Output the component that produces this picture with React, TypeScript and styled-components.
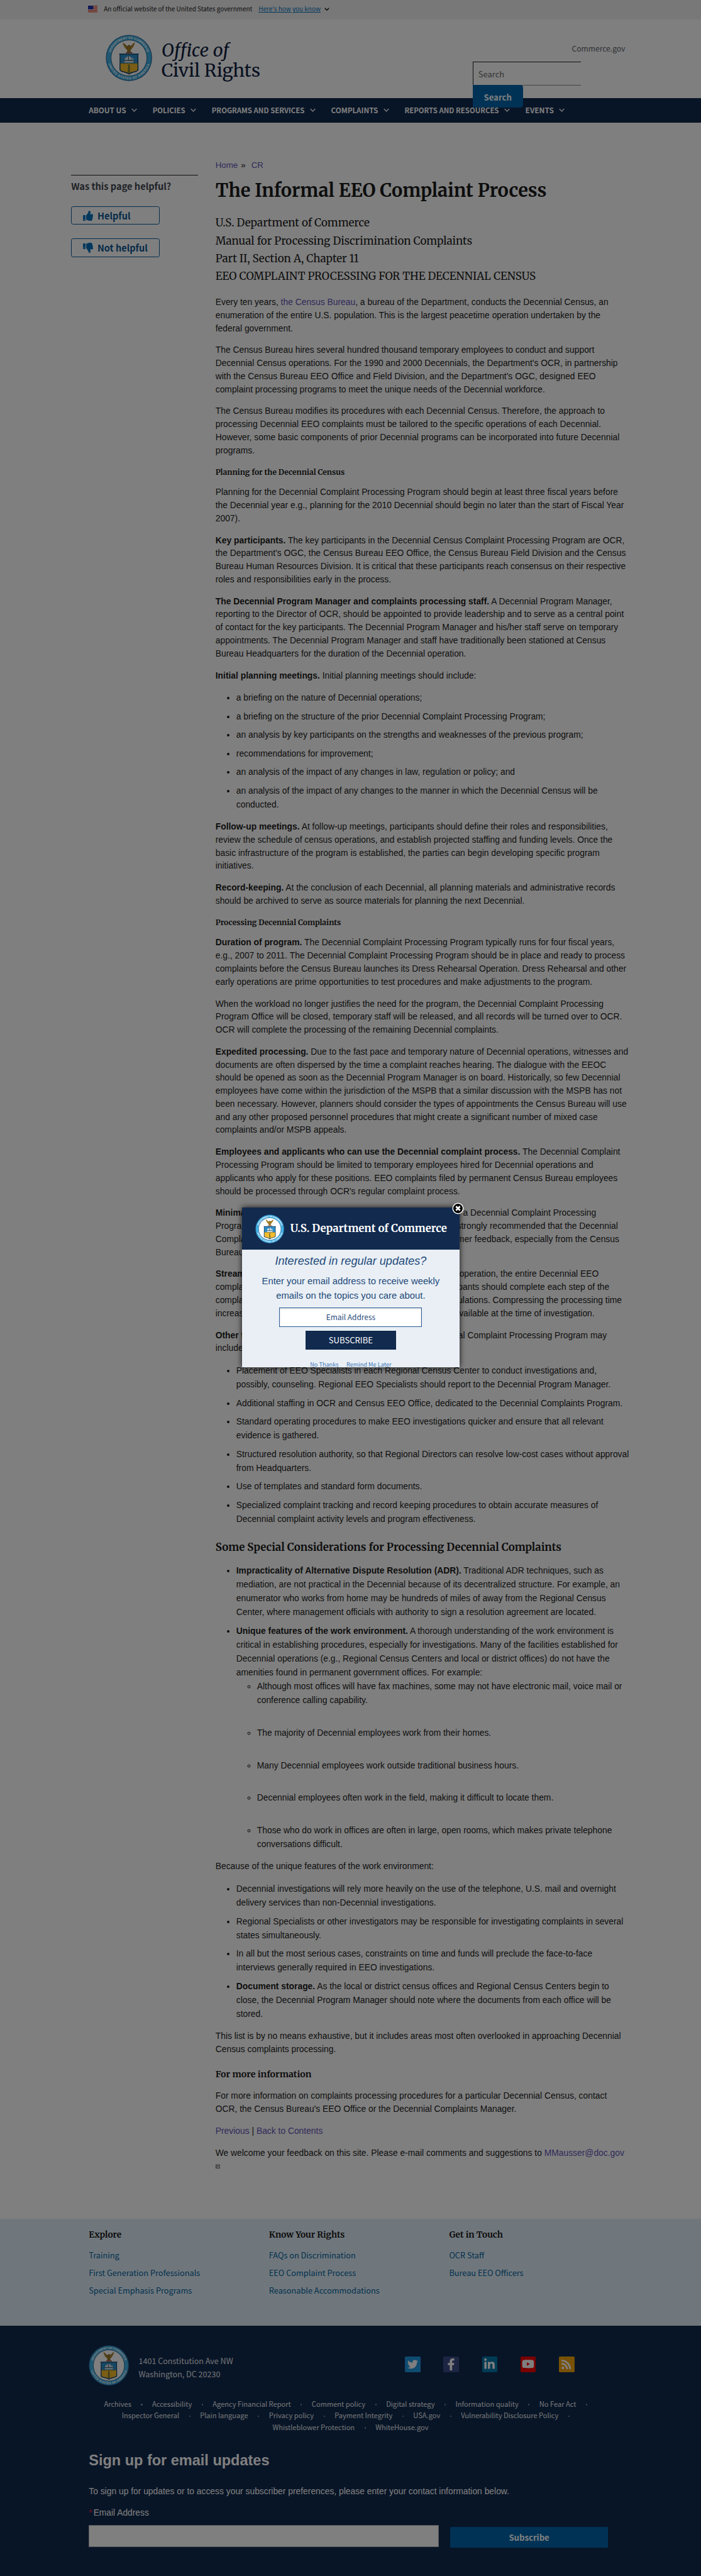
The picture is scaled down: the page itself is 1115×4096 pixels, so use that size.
import React from "react";
import styled, { createGlobalStyle } from "styled-components";
import {
  FaFacebookF,
  FaLinkedinIn,
  FaRss,
  FaThumbsDown,
  FaThumbsUp,
  FaTwitter,
  FaYoutube,
} from "react-icons/fa";

const serif = `Merriweather, "Noto Serif", "DejaVu Serif", serif`;
const sans = `"Noto Sans CJK SC", "Open Sans", sans-serif`;
const body = `"Liberation Sans", Arial, sans-serif`;

const navy = "#112a4e";
const blue = "#0065ab";
const linkBlue = "#0071bc";
const visited = "#5f53b4";
const ink = "#1b1b1b";

const GlobalStyle = createGlobalStyle`
  html { font-size: 8.2593px; }
  *, *::before, *::after { box-sizing: border-box; }
  body { margin: 0; background: #fff; }
  a { text-decoration: none; color: inherit; }
`;

const Page = styled.div`
  position: relative;
  width: 135rem;
  height: 495.93rem;
  overflow: hidden;
  background: #fff;
  color: ${ink};
  font-family: ${body};
  font-size: 1.678rem;
`;

/* ---------- top banner ---------- */

const Banner = styled.div`
  display: flex;
  align-items: center;
  height: 3.7rem;
  padding: 0 0 0.2rem 16.9rem;
  background: #f0f0f0;
  font: 1.206rem/2rem ${sans};
  svg { display: block; }
`;
const FlagIcon = styled.svg`
  width: 1.9rem;
  height: 1.3rem;
  margin-right: 1.2rem;
`;
const BannerLink = styled.a`
  margin: 0 0.7rem 0 1.2rem;
  color: ${linkBlue};
  text-decoration: underline;
`;

const Caret = styled.svg<{ $w: string; $h: string }>`
  width: ${(p) => p.$w};
  height: ${(p) => p.$h};
  fill: none;
  stroke: currentColor;
`;

function Chevron({ w, h, weight }: { w: string; h: string; weight: number }) {
  return (
    <Caret $w={w} $h={h} viewBox="0 0 12 8" strokeWidth={weight}>
      <path d="M1 1.2 6 6.5 11 1.2" />
    </Caret>
  );
}

/* ---------- header ---------- */

const Header = styled.header`
  display: flex;
  align-items: flex-start;
  height: 15.2rem;
  padding: 3rem 14.6rem 0 20.4rem;
`;
const SealSvg = styled.svg<{ $size: string }>`
  flex: none;
  width: ${(p) => p.$size};
  height: ${(p) => p.$size};
`;
const SiteName = styled.div`
  margin: 1.2rem 0 0 1.7rem;
  color: #0f2040;
  font: 3.445rem/3.8rem ${serif};
  white-space: nowrap;
  em { display: block; font-size: 3.49rem; }
`;
const Utility = styled.div`
  display: flex;
  flex-direction: column;
  align-items: flex-start;
  width: 29.4rem;
  margin: 1.4rem 0 0 auto;
`;
const UtilityLink = styled.a`
  align-self: flex-end;
  color: #5b616b;
  font: 1.468rem/2.4rem ${sans};
`;
const SearchBox = styled.div`
  display: flex;
  align-items: center;
  width: 20.9rem;
  height: 4.6rem;
  margin-top: 1.35rem;
  padding: 0.3rem 0 0 1rem;
  border: solid #212121;
  border-width: 0.2rem 0 0.2rem 0.12rem;
  border-bottom-color: #8a8a8a;
  color: #666;
  font: 1.567rem/2.4rem ${sans};
`;
const SearchButton = styled.button`
  position: relative;
  z-index: 1;
  width: 9.7rem;
  height: 4.35rem;
  margin-top: -0.1rem;
  padding: 0.45rem 0 0;
  border: 0;
  border-radius: 0 0.5rem 0.5rem 0;
  background: ${blue};
  color: #fff;
  font: 700 1.6rem/2.4rem ${sans};
`;

/* ---------- navigation ---------- */

const Nav = styled.nav`
  display: flex;
  align-items: center;
  gap: 3rem;
  height: 4.7rem;
  padding: 0.1rem 0 0 17.1rem;
  border-bottom: 0.1rem solid #0a1a30;
  background: ${navy};
  color: #fff;
`;
const NavItem = styled.a<{ $size?: string }>`
  display: flex;
  align-items: center;
  gap: 1rem;
  font: 700 ${(p) => p.$size || "1.385rem"}/2rem ${sans};
  white-space: nowrap;
`;

/* ---------- main ---------- */

const Main = styled.main`
  display: grid;
  grid-template-columns: 24.4rem 79.8rem;
  column-gap: 3.4rem;
  height: 403.5rem;
  padding: 7.02rem 0 0 13.7rem;
`;
const Sidebar = styled.aside`
  align-self: start;
  margin-top: 3.1rem;
  padding-top: 0.85rem;
  border-top: 0.12rem solid #212121;
`;
const Question = styled.h2`
  margin: 0 0 2.6rem;
  color: #3f454e;
  font: 700 1.767rem/2.4rem ${sans};
`;
const VoteButton = styled.button`
  display: flex;
  align-items: center;
  gap: 0.8rem;
  width: 17.1rem;
  height: 3.6rem;
  margin: 0 0 2.6rem;
  padding: 0 0 0 2.2rem;
  border: 0.2rem solid #0a5d9c;
  border-radius: 0.4rem;
  background: none;
  color: #0a5590;
  font: 700 1.76rem/2.4rem ${sans};
  svg { width: 1.95rem; height: 1.95rem; color: ${linkBlue}; }
`;

const Article = styled.article`
  line-height: 2.515rem;
  p { margin: 1.7rem 0; }
`;
const Breadcrumb = styled.div`
  display: flex;
  height: 2.4rem;
  font: 1.612rem/2.4rem ${body};
  span { margin: 0 1.1rem 0 0.6rem; }
`;
const Link = styled.a`
  color: ${visited};
`;
const Title = styled.h1`
  margin: 1.35rem 0 2.25rem;
  font: 700 3.495rem/4.6rem ${serif};
  white-space: nowrap;
`;
const Subtitle = styled.div`
  margin-bottom: 2.02rem;
  font: 2.055rem/3.42rem ${serif};
  white-space: nowrap;
`;
const Minor = styled.h5`
  margin: 2.09rem 0 1.7rem;
  font: 700 1.464rem/1.75rem ${serif};
`;
const Section = styled.h3`
  margin: 2.9rem 0 1.7rem;
  font: 700 2.041rem/2.6rem ${serif};
  white-space: nowrap;
`;
const Info = styled.h4`
  margin: 2.5rem 0 1.7rem;
  font: 700 1.722rem/2.3rem ${serif};
`;
const List = styled.ul`
  margin: 1.7rem 0;
  padding-left: 4rem;
  line-height: 2.68rem;
  > li + li { margin-top: 0.89rem; }
`;
const SubList = styled.ul`
  margin: 0;
  padding-left: 4rem;
  list-style: circle;
  > li + li { margin-top: 3.57rem; }
`;
const SplitLine = styled.span<{ $w: string }>`
  display: flex;
  justify-content: space-between;
  width: ${(p) => p.$w};
  white-space: nowrap;
`;
const MailIcon = styled.svg`
  display: block;
  width: 0.9rem;
  height: 0.9rem;
  margin-top: 0.9rem;
`;

/* ---------- footer ---------- */

const LinkFooter = styled.footer`
  display: grid;
  grid-template-columns: repeat(3, 34.7rem);
  height: 20.6rem;
  padding: 2.05rem 0 0 17.1rem;
  background: #e0eef8;
`;
const FooterColumn = styled.div`
  display: flex;
  flex-direction: column;
  align-items: flex-start;
  gap: 1.17rem;
  color: #00639f;
  font: 1.545rem/2.2rem ${sans};
  h4 {
    margin: 0 0 0.43rem;
    color: ${ink};
    font: 700 1.65rem/2.4rem ${serif};
  }
`;
const DarkFooter = styled.footer`
  height: 48.3rem;
  padding: 3.8rem 17.1rem 0;
  background: ${navy};
  color: #fff;
`;
const Identity = styled.div`
  display: flex;
  align-items: flex-start;
`;
const Address = styled.div`
  margin: 1.85rem 0 0 1.8rem;
  color: #e4e6ea;
  font: 1.521rem/2.47rem ${sans};
`;
const Socials = styled.div`
  display: flex;
  gap: 4.4rem;
  margin: 2.2rem 7.3rem 0 auto;
`;
const Social = styled.a<{ $bg: string; $glyph?: string }>`
  display: flex;
  align-items: center;
  justify-content: center;
  width: 3rem;
  height: 2.95rem;
  border-radius: 0.2rem;
  background: ${(p) => p.$bg};
  svg { width: ${(p) => p.$glyph || "2.1rem"}; height: ${(p) => p.$glyph || "2.1rem"}; }
`;
const PolicyLinks = styled.div`
  margin-top: 2.35rem;
  color: #e8eaee;
  font: 1.345rem/2.25rem ${sans};
`;
const PolicyRow = styled.div`
  display: flex;
  justify-content: center;
  white-space: nowrap;
`;
const PolicyItem = styled.a<{ $dot: boolean }>`
  display: flex;
  align-items: center;
  &::after {
    content: "";
    display: ${(p) => (p.$dot ? "block" : "none")};
    width: 0.25rem;
    height: 0.35rem;
    margin: 0.3rem 1.88rem 0;
    border-radius: 50%;
    background: #7d93b5;
  }
`;
const SignUpTitle = styled.h2`
  margin: 3.6rem 0 2.8rem;
  font: 700 2.847rem/3.6rem ${body};
`;
const SignUpText = styled.p`
  margin: 0 0 1.75rem;
  font: 1.677rem/2.5rem ${body};
`;
const Label = styled.label`
  display: block;
  font: 1.672rem/2.5rem ${body};
  span { margin-right: 0.25rem; color: #e31c3d; }
`;
const Form = styled.div`
  display: flex;
  gap: 2.2rem;
  margin-top: 1rem;
`;
const EmailField = styled.input`
  width: 67.4rem;
  height: 4.2rem;
  border: 0.1rem solid #aeb0b5;
  border-radius: 0;
  background: #fff;
`;
const SubscribeButton = styled.button`
  width: 30.4rem;
  height: 4.1rem;
  margin-top: 0.3rem;
  padding: 0;
  border: 0;
  border-radius: 0.2rem;
  background: ${blue};
  color: #fff;
  font: 700 1.596rem/2.4rem ${sans};
`;

/* ---------- modal ---------- */

const Backdrop = styled.div`
  position: absolute;
  inset: 0;
  z-index: 2;
  background: rgba(0, 0, 0, 0.5);
`;
const ModalFrame = styled.div`
  position: absolute;
  z-index: 3;
  left: 46.6rem;
  top: 232.5rem;
  width: 41.9rem;
  height: 30.77rem;
  box-shadow: 0 0 1.1rem rgba(0, 0, 0, 0.85);
`;
const Modal = styled.div`
  height: 100%;
  overflow: hidden;
  background: #e9eff5;
  color: #1f4a7a;
  text-align: center;
`;
const ModalHead = styled.div`
  display: flex;
  align-items: center;
  gap: 1.2rem;
  height: 8.1rem;
  padding-left: 2.5rem;
  background: ${navy};
  color: #fff;
  font: 700 2.038rem/2.8rem ${serif};
  white-space: nowrap;
`;
const ModalTitle = styled.div`
  padding-top: 0.84rem;
  font: italic 2.198rem/2.8rem ${body};
`;
const ModalText = styled.div`
  margin-top: 1.12rem;
  font: 1.796rem/2.77rem ${body};
`;
const ModalInput = styled.div`
  width: 27.5rem;
  height: 3.77rem;
  margin: 0.83rem auto 0.7rem;
  border: 0.12rem solid #2f5f96;
  background: #fff;
  box-shadow: inset 0 0.1rem 0.3rem rgba(0, 0, 0, 0.2);
  font: 1.445rem/3.5rem ${sans};
`;
const ModalButton = styled.button`
  display: block;
  width: 17.5rem;
  height: 3.6rem;
  margin: 0 auto 2.05rem;
  padding: 0;
  border: 0;
  background: ${navy};
  color: #fff;
  font: 1.584rem/3.4rem ${sans};
`;
const ModalLinks = styled.div`
  display: flex;
  justify-content: center;
  gap: 1.5rem;
  color: #3f78b5;
  font: 1.112rem/1.6rem ${sans};
`;
const CloseIcon = styled.svg`
  position: absolute;
  right: -0.85rem;
  top: -1.05rem;
  width: 2.3rem;
  height: 2.3rem;
`;

function Seal({ size, id }: { size: string; id: string }) {
  return (
    <SealSvg $size={size} viewBox="0 0 90 90">
      <defs>
        <path id={`${id}-top`} d="M8.3 45a36.7 36.7 0 0 1 73.4 0" />
        <path id={`${id}-bottom`} d="M3.8 45a41.2 41.2 0 0 0 82.4 0" />
      </defs>
      <circle cx="45" cy="45" r="44.5" fill="#2b6fa0" />
      <circle cx="45" cy="45" r="43" fill="#41aee2" />
      <circle cx="45" cy="45" r="34.6" fill="#fff" stroke="#24618f" strokeWidth="1.2" />
      <g fill="#fff" fontFamily="Liberation Sans, Arial, sans-serif" fontSize="6.2" fontWeight="700">
        <text textAnchor="middle" textLength="94" lengthAdjust="spacing">
          <textPath href={`#${id}-top`} startOffset="50%">DEPARTMENT OF COMMERCE</textPath>
        </text>
        <text textAnchor="middle" textLength="106" lengthAdjust="spacing">
          <textPath href={`#${id}-bottom`} startOffset="50%">UNITED STATES OF AMERICA</textPath>
        </text>
      </g>
      {/* eagle */}
      <path
        d="M32.3 15.4c2.4.6 5.300 3 7.700 5.600 1.300 1.300 2.300 1.500 3 .6.300-1 1-2 2.200-2 1 0 1.700.7 1.600 1.900 1.200.5 2.600-.2 4-1.900 2-2.500 4-3.700 6-4.200-1.700 2.700-1.900 5.400-3.700 8.300-1.500 2.600-3.500 4.700-5.200 5.900l.8 3.900h-7.600l.8-3.900c-2.800-1.500-5.300-4.300-6.700-7.400-1.100-2.500-1.500-4.800-2.900-6.800z"
        fill="#8e6b1e"
      />
      <path
        d="m34.500 18 6.600 7.300M35.800 22.200l5.600 5.300M54.600 18.300l-6.200 7.200M53 22.600l-4.900 5M45 23v8"
        stroke="#d8ad3e"
        strokeWidth="1"
        fill="none"
      />
      <path d="M39 34h12.500v1.800H39z" fill="#7a3320" />
      {/* shield */}
      <path d="M26 36.500h38l-1 3.400.3 27.400c0 2.600-2.300 4-6 4.900-5.500 1.200-9.700 2.500-12.300 4.700-2.600-2.200-6.800-3.500-12.300-4.700-3.700-.9-6-2.300-6-4.900L27 39.900z" fill="#16456a" />
      <path d="M28.600 38.500h32.800v17H28.600z" fill="#2c8fc9" />
      <path d="M28.600 55.500h32.800v11.300c0 2-1.700 3-5 3.700-5.300 1.100-9 2.300-11.400 4-2.400-1.700-6.100-2.900-11.400-4-3.300-.7-5-1.700-5-3.700z" fill="#f5bd2c" />
      <path d="M35 50.500h20l-2.200 3.300H37.200zM37.500 45l6-3.500v7.500h-7zM44.800 40.500l5.200 4.400V49h-5.200zM51 43.500l3.600 5.500H51z" fill="#dfe6ea" />
      <path d="M34 50h22M44.200 40v10.500" stroke="#52402c" strokeWidth="0.900" />
      <path d="M43.300 57.500h3.200l.6 15.300L45 74l-2.100-1.200z" fill="#7b7a3a" />
      <path d="M29 56.200h32" stroke="#c99416" strokeWidth="1" />
    </SealSvg>
  );
}

const NAV: [string, string][] = [
  ["ABOUT US", "1.425rem"],
  ["POLICIES", "1.38rem"],
  ["PROGRAMS AND SERVICES", "1.383rem"],
  ["COMPLAINTS", "1.415rem"],
  ["REPORTS AND RESOURCES", "1.38rem"],
  ["EVENTS", "1.44rem"],
];

const FOOTER: [string, string[]][] = [
  ["Explore", ["Training", "First Generation Professionals", "Special Emphasis Programs"]],
  ["Know Your Rights", ["FAQs on Discrimination", "EEO Complaint Process", "Reasonable Accommodations"]],
  ["Get in Touch", ["OCR Staff", "Bureau EEO Officers"]],
];

const POLICY = [
  ["Archives", "Accessibility", "Agency Financial Report", "Comment policy", "Digital strategy", "Information quality", "No Fear Act"],
  ["Inspector General", "Plain language", "Privacy policy", "Payment Integrity", "USA.gov", "Vulnerability Disclosure Policy"],
  ["Whistleblower Protection", "WhiteHouse.gov"],
];

export default function App() {
  return (
    <Page>
      <GlobalStyle />
      <Banner>
        <FlagIcon viewBox="0 0 19 13">
          <rect width="19" height="13" fill="#fff" />
          <path d="M0 .9h19M0 3.700h19M0 6.500h19M0 9.300h19M0 12.100h19" stroke="#db3e1f" strokeWidth="1.500" />
          <rect width="10" height="7.200" fill="#1e33b1" />
        </FlagIcon>
        An official website of the United States government
        <BannerLink>Here's how you know</BannerLink>
        <Chevron w="0.95rem" h="0.65rem" weight={2.2} />
      </Banner>

      <Header>
        <Seal size="9rem" id="head" />
        <SiteName>
          <em>Office of</em>
          Civil Rights
        </SiteName>
        <Utility>
          <UtilityLink>Commerce.gov</UtilityLink>
          <SearchBox>Search</SearchBox>
          <SearchButton>Search</SearchButton>
        </Utility>
      </Header>

      <Nav>
        {NAV.map(([label, size]) => (
          <NavItem key={label} $size={size}>
            {label}
            <Chevron w="1.1rem" h="0.75rem" weight={1.7} />
          </NavItem>
        ))}
      </Nav>

      <Main>
        <Sidebar>
          <Question>Was this page helpful?</Question>
          <VoteButton>
            <FaThumbsUp />
            Helpful
          </VoteButton>
          <VoteButton>
            <FaThumbsDown />
            Not helpful
          </VoteButton>
        </Sidebar>

        <Article>
          <Breadcrumb>
            <Link>Home</Link>
            <span>»</span>
            <Link>CR</Link>
          </Breadcrumb>
          <Title>The Informal EEO Complaint Process</Title>
          <Subtitle>
            U.S. Department of Commerce
            <br />
            Manual for Processing Discrimination Complaints
            <br />
            Part II, Section A, Chapter 11
            <br />
            EEO COMPLAINT PROCESSING FOR THE DECENNIAL CENSUS
          </Subtitle>

          <p>
            Every ten years, <Link>the Census Bureau</Link>, a bureau of the Department, conducts the Decennial Census, an
            enumeration of the entire U.S. population. This is the largest peacetime operation undertaken by the
            <br />
            federal government.
          </p>
          <p>
            The Census Bureau hires several hundred thousand temporary employees to conduct and support Decennial Census
            operations. For the 1990 and 2000 Decennials, the Department's OCR, in partnership with the Census Bureau EEO
            Office and Field Division, and the Department's OGC, designed EEO complaint processing programs to meet the
            unique needs of the Decennial workforce.
          </p>
          <p>
            The Census Bureau modifies its procedures with each Decennial Census. Therefore, the approach to processing
            Decennial EEO complaints must be tailored to the specific operations of each Decennial. However, some basic
            components of prior Decennial programs can be incorporated into future Decennial programs.
          </p>

          <Minor>Planning for the Decennial Census</Minor>
          <p>
            Planning for the Decennial Complaint Processing Program should begin at least three fiscal years before the
            Decennial year e.g., planning for the 2010 Decennial should begin no later than the start of Fiscal Year
            2007).
          </p>
          <p>
            <b>Key participants.</b> The key participants in the Decennial Census Complaint Processing Program are OCR,
            the Department's OGC, the Census Bureau EEO Office, the Census Bureau Field Division and the Census Bureau
            Human Resources Division. It is critical that these participants reach consensus on their respective roles
            and responsibilities early in the process.
          </p>
          <p>
            <b>The Decennial Program Manager and complaints processing staff.</b> A Decennial Program Manager, reporting
            to the Director of OCR, should be appointed to provide leadership and to serve as a central point of contact
            for the key participants. The Decennial Program Manager and his/her staff serve on temporary appointments.
            The Decennial Program Manager and staff have traditionally been stationed at Census Bureau Headquarters for
            the duration of the Decennial operation.
          </p>
          <p>
            <b>Initial planning meetings.</b> Initial planning meetings should include:
          </p>
          <List>
            <li>a briefing on the nature of Decennial operations;</li>
            <li>a briefing on the structure of the prior Decennial Complaint Processing Program;</li>
            <li>an analysis by key participants on the strengths and weaknesses of the previous program;</li>
            <li>recommendations for improvement;</li>
            <li>an analysis of the impact of any changes in law, regulation or policy; and</li>
            <li>
              an analysis of the impact of any changes to the manner in which the Decennial Census will be conducted.
            </li>
          </List>
          <p>
            <b>Follow-up meetings.</b> At follow-up meetings, participants should define their roles and
            responsibilities, review the schedule of census operations, and establish projected staffing and funding
            levels. Once the basic infrastructure of the program is established, the parties can begin developing
            specific program initiatives.
          </p>
          <p>
            <b>Record-keeping.</b> At the conclusion of each Decennial, all planning materials and administrative records
            should be archived to serve as source materials for planning the next Decennial.
          </p>

          <Minor>Processing Decennial Complaints</Minor>
          <p>
            <b>Duration of program.</b> The Decennial Complaint Processing Program typically runs for four fiscal years,
            e.g., 2007 to 2011. The Decennial Complaint Processing Program should be in place and ready to process
            complaints before the Census Bureau launches its Dress Rehearsal Operation. Dress Rehearsal and other early
            operations are prime opportunities to test procedures and make adjustments to the program.
          </p>
          <p>
            When the workload no longer justifies the need for the program, the Decennial Complaint Processing Program
            Office will be closed, temporary staff will be released, and all records will be turned over to OCR. OCR will
            complete the processing of the remaining Decennial complaints.
          </p>
          <p>
            <b>Expedited processing.</b> Due to the fast pace and temporary nature of Decennial operations, witnesses and
            documents are often dispersed by the time a complaint reaches hearing. The dialogue with the EEOC should be
            opened as soon as the Decennial Program Manager is on board. Historically, so few Decennial employees have
            come within the jurisdiction of the MSPB that a similar discussion with the MSPB has not been necessary.
            However, planners should consider the types of appointments the Census Bureau will use and any other proposed
            personnel procedures that might create a significant number of mixed case complaints and/or MSPB appeals.
          </p>
          <p>
            <b>Employees and applicants who can use the Decennial complaint process.</b> The Decennial Complaint
            Processing Program should be limited to temporary employees hired for Decennial operations and applicants who
            apply for these positions. EEO complaints filed by permanent Census Bureau employees should be processed
            through OCR's regular complaint process.
          </p>
          <p>
            <SplitLine $w="73.3rem">
              <b>Minimal staffing.</b>
              <span>a Decennial Complaint Processing</span>
            </SplitLine>
            <SplitLine $w="77.5rem">
              <span>Program</span>
              <span>strongly recommended that the Decennial</span>
            </SplitLine>
            <SplitLine $w="77.75rem">
              <span>Complaint</span>
              <span>customer feedback, especially from the Census</span>
            </SplitLine>
            Bureau.
          </p>
          <p>
            <SplitLine $w="73.8rem">
              <b>Streamlining.</b>
              <span>operation, the entire Decennial EEO</span>
            </SplitLine>
            <SplitLine $w="75.85rem">
              <span>complaint</span>
              <span>participants should complete each step of the</span>
            </SplitLine>
            <SplitLine $w="78.25rem">
              <span>complaint</span>
              <span>regulations. Compressing the processing time</span>
            </SplitLine>
            <SplitLine $w="73rem">
              <span>increases</span>
              <span>available at the time of investigation.</span>
            </SplitLine>
          </p>
          <p>
            <SplitLine $w="75.35rem">
              <b>Other techniques.</b>
              <span>Decennial Complaint Processing Program may</span>
            </SplitLine>
            include:
          </p>
          <List>
            <li>
              Placement of EEO Specialists in each Regional Census Center to conduct investigations and, possibly,
              counseling. Regional EEO Specialists should report to the Decennial Program Manager.
            </li>
            <li>Additional staffing in OCR and Census EEO Office, dedicated to the Decennial Complaints Program.</li>
            <li>
              Standard operating procedures to make EEO investigations quicker and ensure that all relevant evidence is
              gathered.
            </li>
            <li>
              Structured resolution authority, so that Regional Directors can resolve low-cost cases without approval
              from Headquarters.
            </li>
            <li>Use of templates and standard form documents.</li>
            <li>
              Specialized complaint tracking and record keeping procedures to obtain accurate measures of Decennial
              complaint activity levels and program effectiveness.
            </li>
          </List>

          <Section>Some Special Considerations for Processing Decennial Complaints</Section>
          <List>
            <li>
              <b>Impracticality of Alternative Dispute Resolution (ADR).</b> Traditional ADR techniques, such as
              mediation, are not practical in the Decennial because of its decentralized structure. For example, an
              enumerator who works from home may be hundreds of miles of away from the Regional Census Center, where
              management officials with authority to sign a resolution agreement are located.
            </li>
            <li>
              <b>Unique features of the work environment.</b> A thorough understanding of the work environment is
              critical in establishing procedures, especially for investigations. Many of the facilities established for
              Decennial operations (e.g., Regional Census Centers and local or district offices) do not have the
              amenities found in permanent government offices. For example:
              <SubList>
                <li>
                  Although most offices will have fax machines, some may not have electronic mail, voice mail or
                  conference calling capability.
                </li>
                <li>The majority of Decennial employees work from their homes.</li>
                <li>Many Decennial employees work outside traditional business hours.</li>
                <li>Decennial employees often work in the field, making it difficult to locate them.</li>
                <li>
                  Those who do work in offices are often in large, open rooms, which makes private telephone
                  conversations difficult.
                </li>
              </SubList>
            </li>
          </List>
          <p>Because of the unique features of the work environment:</p>
          <List>
            <li>
              Decennial investigations will rely more heavily on the use of the telephone, U.S. mail and overnight
              delivery services than non-Decennial investigations.
            </li>
            <li>
              Regional Specialists or other investigators may be responsible for investigating complaints in several
              states simultaneously.
            </li>
            <li>
              In all but the most serious cases, constraints on time and funds will preclude the face-to-face interviews
              generally required in EEO investigations.
            </li>
            <li>
              <b>Document storage.</b> As the local or district census offices and Regional Census Centers begin to
              close, the Decennial Program Manager should note where the documents from each office will be stored.
            </li>
          </List>
          <p>
            This list is by no means exhaustive, but it includes areas most often overlooked in approaching Decennial
            Census complaints processing.
          </p>

          <Info>For more information</Info>
          <p>
            For more information on complaints processing procedures for a particular Decennial Census, contact OCR, the
            Census Bureau's EEO Office or the Decennial Complaints Manager.
          </p>
          <p>
            <Link>Previous</Link> | <Link>Back to Contents</Link>
          </p>
          <p>
            We welcome your feedback on this site. Please e-mail comments and suggestions to{" "}
            <Link>MMausser@doc.gov</Link>
            <MailIcon viewBox="0 0 9 9">
              <path d="M.5 1.500h8v6.500h-8zM.5 1.500l4 3.500 4-3.500M.5 8l3-3.800M8.500 8l-3-3.800" fill="none" stroke="#444" />
            </MailIcon>
          </p>
        </Article>
      </Main>

      <LinkFooter>
        {FOOTER.map(([title, links]) => (
          <FooterColumn key={title}>
            <h4>{title}</h4>
            {links.map((l) => (
              <a key={l}>{l}</a>
            ))}
          </FooterColumn>
        ))}
      </LinkFooter>

      <DarkFooter>
        <Identity>
          <Seal size="7.8rem" id="foot" />
          <Address>
            1401 Constitution Ave NW
            <br />
            Washington, DC 20230
          </Address>
          <Socials>
            <Social $bg="#1f97e0" $glyph="2.05rem"><FaTwitter /></Social>
            <Social $bg="#3b4a88" $glyph="2.3rem"><FaFacebookF /></Social>
            <Social $bg="#0077a8" $glyph="2.3rem"><FaLinkedinIn /></Social>
            <Social $bg="#f50000" $glyph="2.4rem"><FaYoutube /></Social>
            <Social $bg="#eea20c" $glyph="2.1rem"><FaRss /></Social>
          </Socials>
        </Identity>
        <PolicyLinks>
          {POLICY.map((row, r) => (
            <PolicyRow key={r}>
              {row.map((l, i) => (
                <PolicyItem key={l} $dot={r < POLICY.length - 1 || i < row.length - 1}>
                  {l}
                </PolicyItem>
              ))}
            </PolicyRow>
          ))}
        </PolicyLinks>
        <SignUpTitle>Sign up for email updates</SignUpTitle>
        <SignUpText>
          To sign up for updates or to access your subscriber preferences, please enter your contact information below.
        </SignUpText>
        <Label>
          <span>*</span>Email Address
        </Label>
        <Form>
          <EmailField />
          <SubscribeButton>Subscribe</SubscribeButton>
        </Form>
      </DarkFooter>

      <Backdrop />
      <ModalFrame>
        <Modal>
          <ModalHead>
            <Seal size="5.6rem" id="modal" />
            U.S. Department of Commerce
          </ModalHead>
          <ModalTitle>Interested in regular updates?</ModalTitle>
          <ModalText>
            Enter your email address to receive weekly
            <br />
            emails on the topics you care about.
          </ModalText>
          <ModalInput>Email Address</ModalInput>
          <ModalButton>SUBSCRIBE</ModalButton>
          <ModalLinks>
            <a>No Thanks</a>
            <a>Remind Me Later</a>
          </ModalLinks>
        </Modal>
        <CloseIcon viewBox="0 0 23 23">
          <circle cx="11.500" cy="11.500" r="10" fill="#000" stroke="#fff" strokeWidth="1.800" />
          <path d="m7.700 7.700 7.600 7.600M15.300 7.700l-7.600 7.600" stroke="#fff" strokeWidth="3.400" />
        </CloseIcon>
      </ModalFrame>
    </Page>
  );
}
